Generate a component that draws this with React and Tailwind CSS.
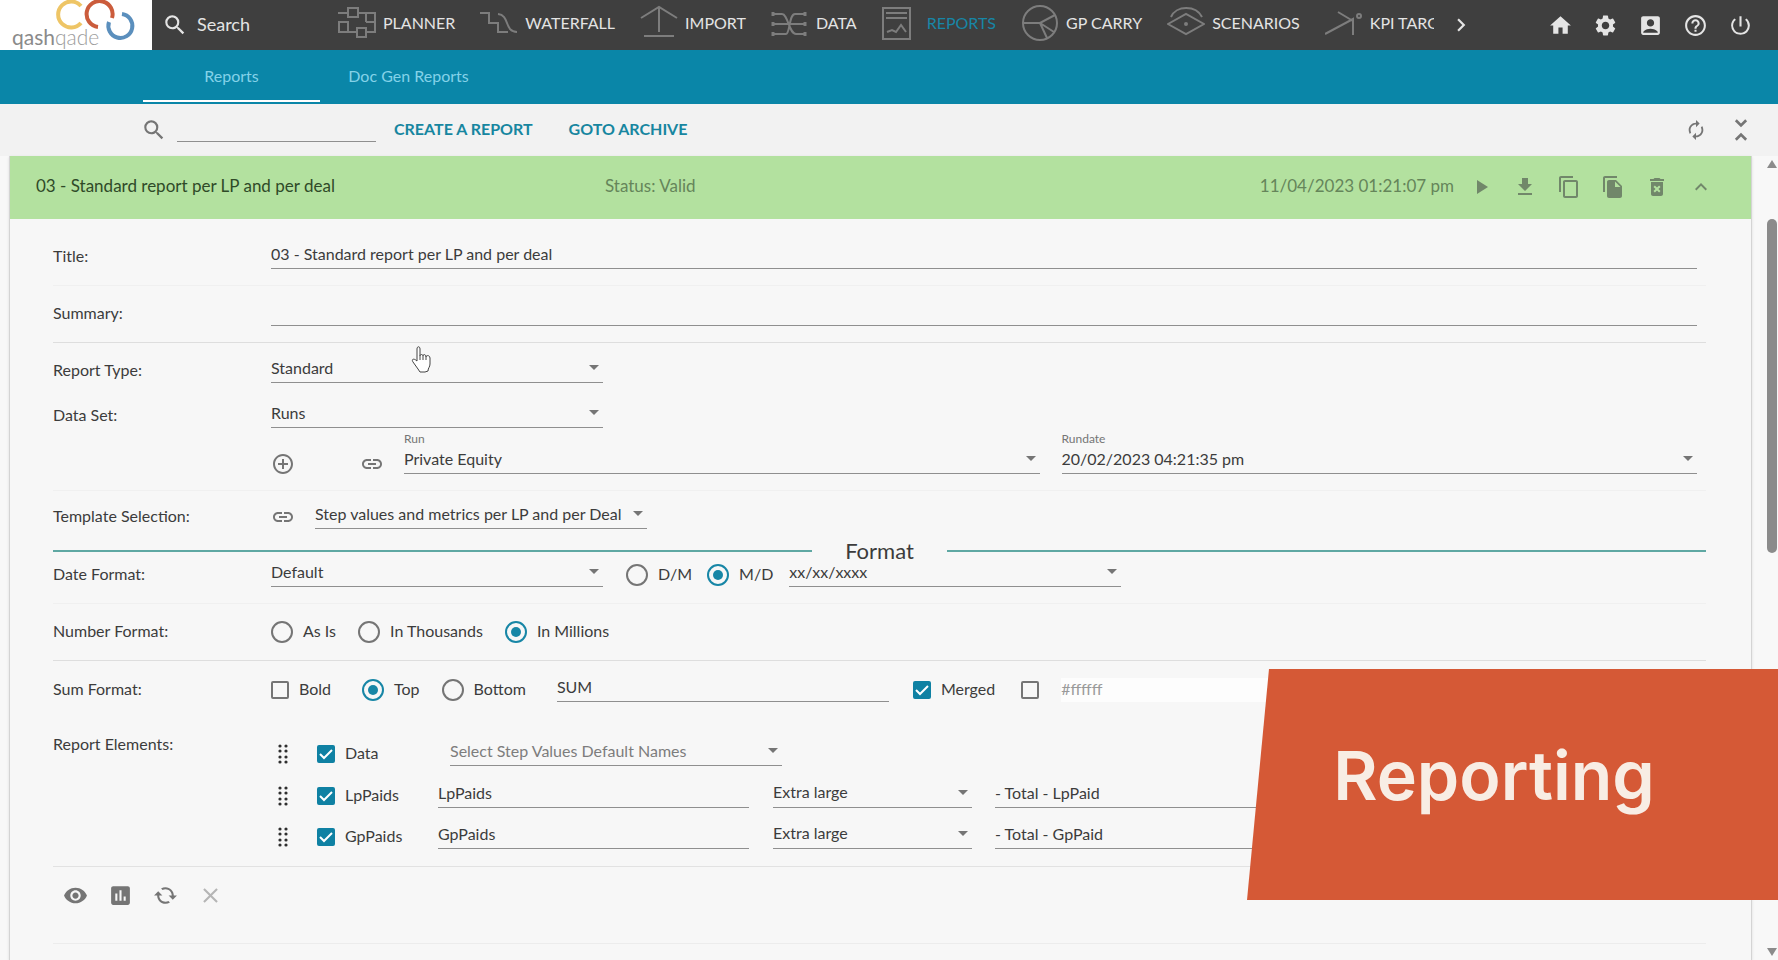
import {
    MdAccountBox,
    MdAddCircleOutline,
    MdAssessment,
    MdAutorenew,
    MdCached,
    MdChevronRight,
    MdClose,
    MdContentCopy,
    MdDeleteForever,
    MdDownload,
    MdFileCopy,
    MdHelpOutline,
    MdHome,
    MdKeyboardArrowUp,
    MdLink,
    MdPlayArrow,
    MdPowerSettingsNew,
    MdRemoveRedEye,
    MdSearch,
    MdSettings,
    MdUnfoldLess,
} from "react-icons/md";

const NAV_ITEMS = [
    {
        label: "PLANNER",
        icon: (
            <>
                <path d="M0 8h10M20 8h17v19H28M19 27H1M28 17h9M28 8v9" />
                <rect x="10" y="3" width="10" height="9" />
                <rect x="1" y="17" width="9" height="10" />
                <rect x="19" y="23" width="9" height="9" />
            </>
        ),
    },
    {
        label: "WATERFALL",
        icon: <path d="M0 8h9v10h9v9h10M18 9c12 1 6 18 19 18" />,
    },
    {
        label: "IMPORT",
        icon: <path d="M1 13L19 2l18 11M19 2v25M4 31h30" />,
    },
    {
        label: "DATA",
        icon: (
            <>
                <path d="M1 9h10c6 0 7 20 14 20h10M1 19h34M1 29h14c4 0 3-20 9-20h11" />
                <path d="M2 7v4M34 7v4M2 17v4M34 17v4M2 27v4M34 27v4" strokeWidth="3" />
            </>
        ),
    },
    {
        label: "REPORTS",
        active: true,
        icon: <path d="M1 3h27v31H1zM4 8h21M4 13h21M5 27l5-2 4 2 5-7 5 7" />,
    },
    {
        label: "GP CARRY",
        icon: (
            <>
                <circle cx="19" cy="18" r="17" />
                <path d="M2 18h17l15-8M19 18l14 9M19 18l7 15" />
            </>
        ),
    },
    {
        label: "SCENARIOS",
        icon: (
            <>
                <path d="M1 19L19 9l18 10-18 10zM4 12C9 0 29 0 35 12" />
                <circle cx="19" cy="19" r="1" />
            </>
        ),
    },
    {
        label: "KPI TARGETS",
        icon: (
            <>
                <path d="M0 29L28 14v16M13 7l15 9" />
                <circle cx="34" cy="11" r="2" />
            </>
        ),
    },
];

const USER_ACTIONS = [
    { label: "Home", Icon: MdHome },
    { label: "Settings", Icon: MdSettings },
    { label: "Account", Icon: MdAccountBox },
    { label: "Help", Icon: MdHelpOutline },
    { label: "Log out", Icon: MdPowerSettingsNew },
];

const REPORT_ACTIONS = [
    { label: "Run", Icon: MdPlayArrow },
    { label: "Download", Icon: MdDownload },
    { label: "Copy", Icon: MdContentCopy },
    { label: "Duplicate", Icon: MdFileCopy },
    { label: "Delete", Icon: MdDeleteForever },
    { label: "Collapse", Icon: MdKeyboardArrowUp },
];

const ELEMENTS = [
    { name: "LpPaids", total: "- Total - LpPaid" },
    { name: "GpPaids", total: "- Total - GpPaid" },
];

const Logo = () => (
    <a href="#home" aria-label="qashqade" className="relative block h-full w-[152px] shrink-0 bg-white">
        <svg viewBox="0 0 152 50" className="h-full w-full" fill="none" strokeWidth="4">
            <path d="M81 6a13 13 0 1 0 0 17" stroke="#eec566" />
            <path d="M98 27a13 13 0 1 1 14-9" stroke="#cb5c3c" />
            <path d="M122 14a12 12 0 1 1-13 8" stroke="#5b8fbd" />
        </svg>
        <span className="absolute left-3 top-[25px] text-[21px] font-light leading-6 text-[#9c9c9c]">
            <b className="text-[#8a8a8a]">qash</b>qade
        </span>
    </a>
);

const Header = () => (
    <header className="flex h-[50px] items-center bg-[#3f3f3f] text-[#e4e4e4]">
        <Logo />
        <label className="ml-[10px] flex w-[176px] shrink-0 items-center gap-[9px]">
            <MdSearch className="size-[26px]" />
            <input
                aria-label="Search"
                placeholder="Search"
                className="w-24 bg-transparent pb-0.5 text-lg outline-none placeholder:text-[#e4e4e4]"
            />
        </label>
        <nav className="flex min-w-0 max-w-[1096px] flex-1 gap-[25px] overflow-hidden pb-1">
            {NAV_ITEMS.map((item) => (
                <a
                    key={item.label}
                    href="#nav"
                    className={`flex shrink-0 items-center gap-[7px] ${item.active ? "text-[#1786a6]" : ""}`}
                >
                    <svg
                        viewBox="0 0 38 36"
                        className="h-9 w-[38px] text-[#7d7d7d]"
                        fill="none"
                        stroke="currentColor"
                        strokeWidth="2"
                    >
                        {item.icon}
                    </svg>
                    <span>{item.label}</span>
                </a>
            ))}
        </nav>
        <button aria-label="More" className="ml-[14px]">
            <MdChevronRight className="size-[26px]" />
        </button>
        <div className="ml-auto mr-[25px] flex shrink-0 gap-5">
            {USER_ACTIONS.map(({ label, Icon }) => (
                <button key={label} aria-label={label}>
                    <Icon className="size-[25px]" />
                </button>
            ))}
        </div>
    </header>
);

const Field = ({ label, value, className = "" }) => (
    <input
        aria-label={label}
        defaultValue={value}
        className={`h-6 min-w-0 border-b border-[#8f8f8f] bg-transparent pb-1.5 outline-none ${className}`}
    />
);

const Select = ({ label, value, className = "w-[332px]", textClassName = "" }) => (
    <div className={`flex h-6 items-center border-b border-[#8f8f8f] pb-1.5 pr-1 ${className}`}>
        <select aria-label={label} className={`min-w-0 flex-1 appearance-none bg-transparent leading-5 outline-none ${textClassName}`}>
            <option>{value}</option>
        </select>
        <svg viewBox="0 0 10 5" className="h-[5px] w-[10px] shrink-0 fill-[#757575]">
            <path d="M0 0h10L5 5z" />
        </svg>
    </div>
);

const Radio = ({ name, label, checked }) => (
    <label className="flex items-center gap-[10px]">
        <input
            type="radio"
            name={name}
            defaultChecked={checked}
            className="size-[22px] appearance-none rounded-full border-2 border-[#757575] bg-clip-content p-1 checked:border-[#1786a6] checked:bg-[#1786a6]"
        />
        <span className="pb-0.5">{label}</span>
    </label>
);

const Checkbox = ({ label, ariaLabel, checked }) => (
    <label className="flex items-center gap-[10px]">
        <span className="grid size-[18px] shrink-0">
            <input
                type="checkbox"
                aria-label={ariaLabel}
                defaultChecked={checked}
                className="peer col-start-1 row-start-1 size-[18px] appearance-none rounded-xs border-2 border-[#757575] checked:border-[#0f81a3] checked:bg-[#0f81a3]"
            />
            <svg
                viewBox="0 0 18 18"
                className="pointer-events-none col-start-1 row-start-1 hidden size-[18px] peer-checked:block"
                fill="none"
                stroke="#fff"
                strokeWidth="2"
            >
                <path d="M3 9l4 4 8-8" />
            </svg>
        </span>
        {label && <span className="pb-0.5">{label}</span>}
    </label>
);

const RowLabel = ({ children }) => <div className="w-[218px] shrink-0 pb-0.5">{children}</div>;

const Row = ({ label, line = "border-[#f0f0f0]", children }) => (
    <div className={`flex h-[57px] items-center border-b ${line}`}>
        <RowLabel>{label}</RowLabel>
        {children}
    </div>
);

const DragHandle = () => (
    <svg viewBox="0 0 12 20" className="h-5 w-3 fill-[#2f2f2f]">
        {[2, 7, 13, 18].map((y) => (
            <g key={y}>
                <circle cx="3" cy={y} r="1.6" />
                <circle cx="9" cy={y} r="1.6" />
            </g>
        ))}
    </svg>
);

const ReportForm = () => (
    <form className="pl-[43px] pr-[45px] pt-[10px]">
        <Row label="Title:">
            <Field label="Title" value="03 - Standard report per LP and per deal" className="mr-[9px] flex-1" />
        </Row>
        <Row label="Summary:" line="border-[#dedede]">
            <Field label="Summary" className="mr-[9px] flex-1" />
        </Row>

        <div className="border-b border-[#f0f0f0] pb-[14px] pt-3">
            <div className="mb-[13px] flex h-8 items-center">
                <RowLabel>Report Type:</RowLabel>
                <Select label="Report type" value="Standard" />
            </div>
            <div className="flex h-8 items-center">
                <RowLabel>Data Set:</RowLabel>
                <Select label="Data set" value="Runs" />
            </div>
            <div className="flex pl-[218px] pr-[9px] text-[#757575]">
                <div className="flex w-[133px] gap-[65px] pt-5">
                    <button type="button" aria-label="Add run" className="h-6">
                        <MdAddCircleOutline className="size-6" />
                    </button>
                    <button type="button" aria-label="Link run" className="h-6">
                        <MdLink className="size-6" />
                    </button>
                </div>
                <div className="grid flex-1 grid-cols-2 gap-[22px]">
                    {[["Run", "Private Equity"], ["Rundate", "20/02/2023 04:21:35 pm"]].map(([label, value]) => (
                        <div key={label}>
                            <div className="mb-[5px] text-xs leading-[13px]">{label}</div>
                            <Select label={label} value={value} className="w-full" textClassName="text-[#3c3c3c]" />
                        </div>
                    ))}
                </div>
            </div>
        </div>

        <div className="flex h-12 items-center pt-1">
            <RowLabel>Template Selection:</RowLabel>
            <button type="button" aria-label="Link template" className="mr-5 text-[#757575]">
                <MdLink className="size-6" />
            </button>
            <Select label="Template" value="Step values and metrics per LP and per Deal" />
        </div>
        <div className="flex h-6 items-center gap-[33px] text-[22px] leading-6">
            <hr className="flex-1 border-t-2 border-[#5fa8a3]" />
            <h2>Format</h2>
            <hr className="flex-1 border-t-2 border-[#5fa8a3]" />
        </div>
        <div className="flex h-[41px] items-center border-b border-[#f0f0f0] pb-4">
            <RowLabel>Date Format:</RowLabel>
            <Select label="Date format" value="Default" />
            <div className="ml-[23px] mr-4 flex gap-[15px]">
                <Radio name="order" label="D/M" />
                <Radio name="order" label="M/D" checked />
            </div>
            <Select label="Date pattern" value="xx/xx/xxxx" />
        </div>
        <Row label="Number Format:" line="border-[#dedede]">
            <div className="flex gap-[22px]">
                <Radio name="number" label="As Is" />
                <Radio name="number" label="In Thousands" />
                <Radio name="number" label="In Millions" checked />
            </div>
        </Row>
        <div className="flex h-[57px] items-center">
            <RowLabel>Sum Format:</RowLabel>
            <Checkbox label="Bold" />
            <div className="mx-[31px] flex gap-[22px]">
                <Radio name="sum" label="Top" checked />
                <Radio name="sum" label="Bottom" />
            </div>
            <Field label="Sum label" value="SUM" className="mr-6 w-[332px]" />
            <Checkbox label="Merged" checked />
            <div className="ml-[26px] mr-[22px]">
                <Checkbox ariaLabel="Use colour" />
            </div>
            <input
                aria-label="Colour"
                defaultValue="#ffffff"
                className="h-6 w-[332px] bg-[#fdfdfd] pb-0.5 text-[#9a9a9a] outline-none"
            />
        </div>

        <div className="flex border-b border-[#e2e2e2] pb-[9px]">
            <div className="w-[218px] shrink-0 pt-4">Report Elements:</div>
            <div className="flex-1 pt-[15px]">
                <div className="flex h-[42px] items-center">
                    <div className="flex w-[179px] items-center gap-7 pl-[6px]">
                        <DragHandle />
                        <Checkbox label="Data" checked />
                    </div>
                    <Select label="Step values" value="Select Step Values Default Names" textClassName="text-[#7d7d7d]" />
                </div>
                {ELEMENTS.map(({ name, total }) => (
                    <div key={name} className="flex h-[41px] items-center">
                        <div className="flex w-[167px] shrink-0 items-center gap-7 pl-[6px]">
                            <DragHandle />
                            <Checkbox label={name} checked />
                        </div>
                        <Field label={name} value={name} className="mr-6 w-[311px]" />
                        <Select label={`${name} size`} value="Extra large" className="mr-[23px] w-[199px]" />
                        <Field label={`${name} total`} value={total} className="mr-[9px] flex-1" />
                    </div>
                ))}
            </div>
        </div>

        <div className="flex h-[77px] items-center gap-5 border-b border-[#ececec] pb-5 pl-[10px] text-[#757575]">
            <button type="button" aria-label="Preview"><MdRemoveRedEye className="size-[25px]" /></button>
            <button type="button" aria-label="Chart"><MdAssessment className="size-[25px]" /></button>
            <button type="button" aria-label="Refresh"><MdCached className="size-[25px] -scale-x-100" /></button>
            <button type="button" aria-label="Cancel" className="text-[#b5b5b5]"><MdClose className="size-[25px]" /></button>
        </div>
    </form>
);

const App = () => (
    <div className="relative flex h-screen flex-col overflow-hidden bg-[#f8f8f8] font-['Lato',sans-serif] text-base leading-5 text-[#3c3c3c]">
        <Header />
        <nav className="flex h-[54px] shrink-0 bg-[#0a86a8] pb-[2px] pl-[143px] text-[#84d2e8]">
            <a href="#reports" className="flex w-[177px] items-center justify-center border-y-2 border-b-white border-t-transparent">
                Reports
            </a>
            <a href="#docgen" className="flex w-[177px] items-center justify-center">
                Doc Gen Reports
            </a>
        </nav>

        <div className="flex h-[52px] shrink-0 items-center bg-[#f2f2f2] pl-[141px] pr-[21px] text-[#757575]">
            <MdSearch className="size-[26px]" />
            <Field label="Filter reports" className="ml-[10px] mr-[18px] w-[199px]" />
            <button className="mr-9 pb-0.5 font-bold text-[#1786a0]">CREATE A REPORT</button>
            <button className="pb-0.5 font-bold text-[#1786a0]">GOTO ARCHIVE</button>
            <button aria-label="Reload" className="ml-auto mr-[18px]"><MdAutorenew className="size-[22px]" /></button>
            <button aria-label="Collapse all"><MdUnfoldLess className="size-8" /></button>
        </div>

        <div className="flex min-h-0 flex-1">
            <main className="ml-[9px] flex-1 border-x border-[#d4d4d4] bg-[#f7f7f7] shadow-sm">
                <div className="flex h-[63px] items-center bg-[#b3e19f] pb-1 pl-[26px] pr-[38px] text-[17px]">
                    <h1 className="w-[569px] text-[#2f4a28]">03 - Standard report per LP and per deal</h1>
                    <div className="text-[#65855a]">Status: Valid</div>
                    <div className="ml-auto mr-[15px] text-[#65855a]">11/04/2023 01:21:07 pm</div>
                    <div className="flex gap-5 pt-0.5 text-[#71876a]">
                        {REPORT_ACTIONS.map(({ label, Icon }) => (
                            <button key={label} aria-label={label}><Icon className="size-6" /></button>
                        ))}
                    </div>
                </div>
                <ReportForm />
            </main>
            <div className="flex w-[26px] flex-col items-end justify-between py-1 pr-px">
                <svg viewBox="0 0 10 8" className="h-2 w-[10px] fill-[#8b8b8b]"><path d="M0 8l5-8 5 8z" /></svg>
                <div className="mb-auto mt-[51px] h-[334px] w-[10px] rounded-full bg-[#8b8b8b]" />
                <svg viewBox="0 0 10 8" className="h-2 w-[10px] fill-[#8b8b8b]"><path d="M0 0l5 8 5-8z" /></svg>
            </div>
        </div>

        {/* hand cursor */}
        <svg viewBox="0 0 20 27" className="absolute left-[411px] top-[346px] h-[27px] w-5" fill="#fff" stroke="#444">
            <path d="M6 15V3c0-3 3-3 3 0v7c0-2 3-2 3 0 0-2 3-2 3 1 0-2 4-2 4 1v6c0 3-2 4-2 7l-3 1H9l-2-3-5-7c-2-3 1-4 4-1zM9 10v4M12 10v4M15 11v3" />
        </svg>

        <aside className="absolute right-0 top-[669px] flex h-[231px] w-[531px] items-center justify-center bg-[#d55936] pb-5 pr-[37px] [clip-path:polygon(22px_0,100%_0,100%_100%,0_100%)]">
            <strong className="font-['Inter',sans-serif] text-[68px] font-semibold leading-none text-[#f8ede4]">Reporting</strong>
        </aside>
    </div>
);

export default App;
